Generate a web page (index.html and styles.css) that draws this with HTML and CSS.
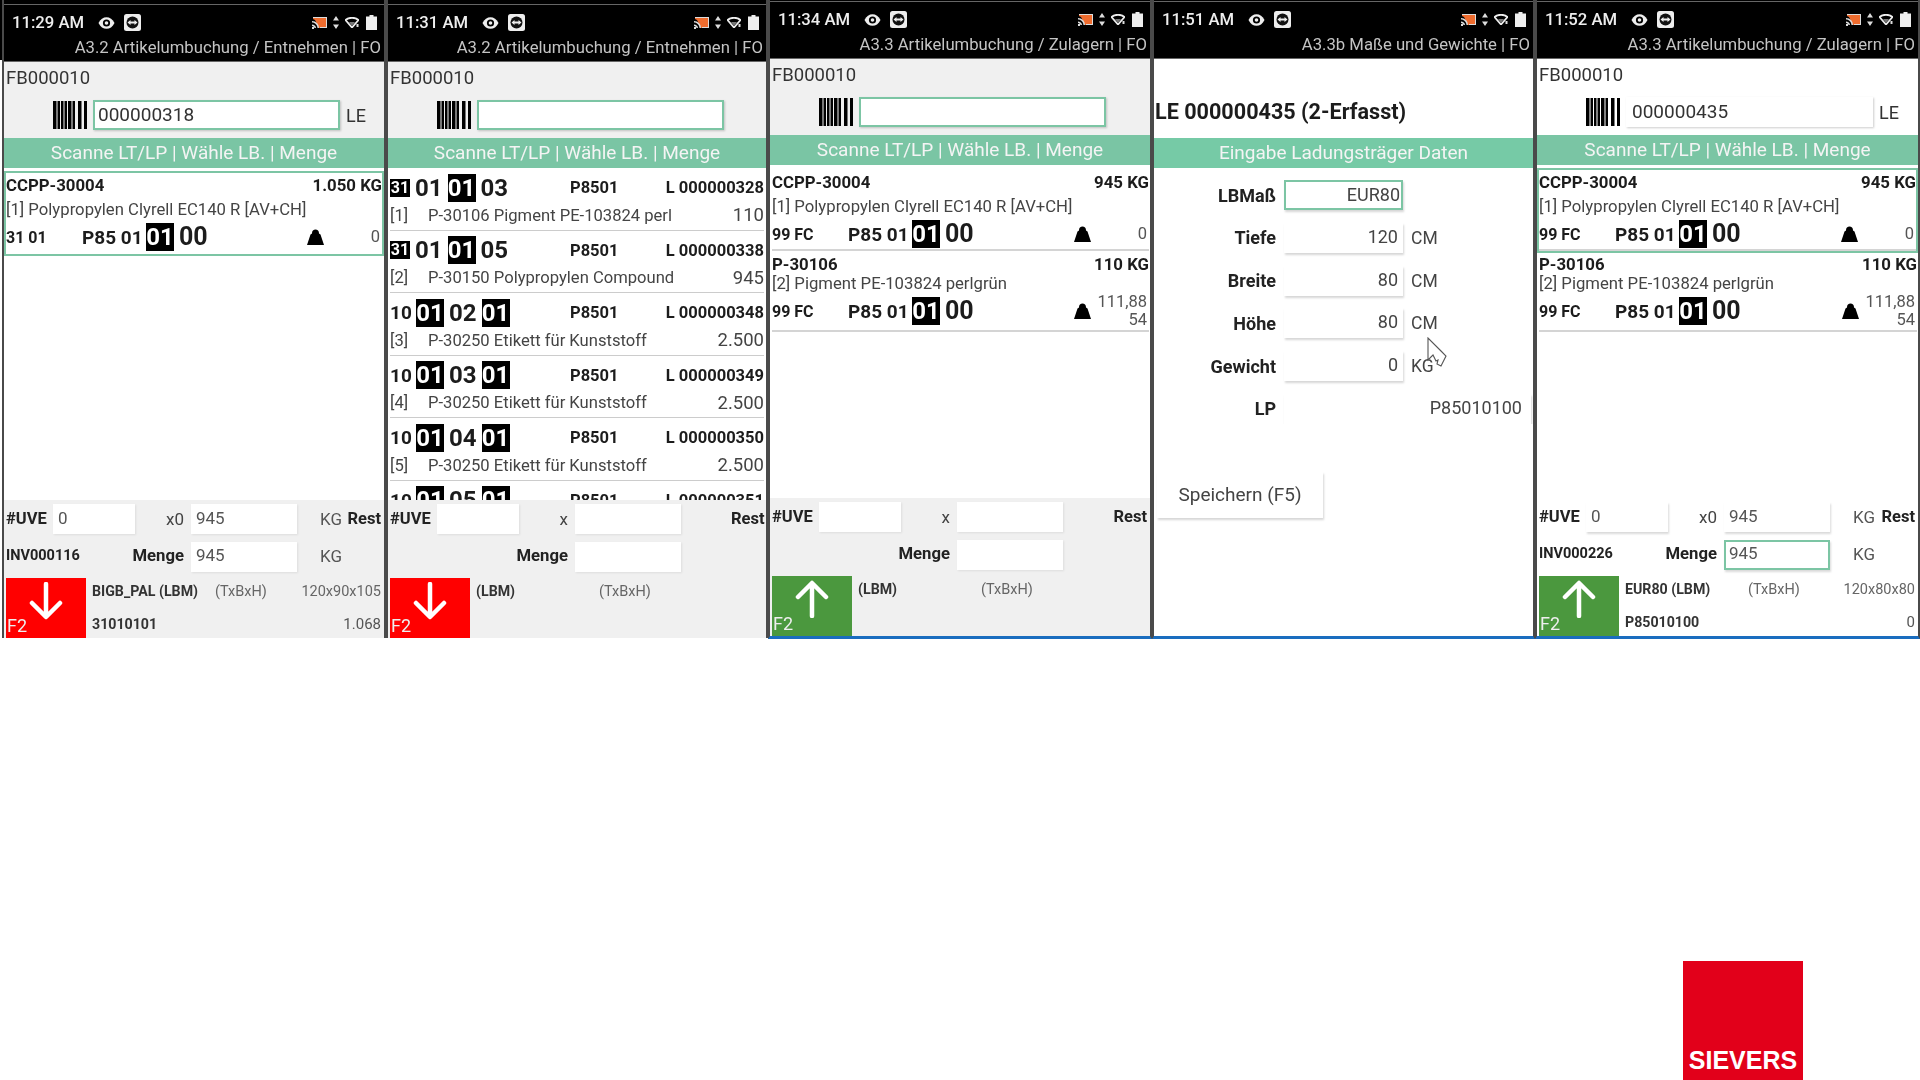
FILE: index.html
```html
<!DOCTYPE html>
<html lang="de">
<head>
<meta charset="UTF-8">
<title>Artikelumbuchung</title>
<link rel="stylesheet" href="styles.css">
</head>
<body>
<svg class="defs" width="0" height="0">
  <symbol id="i-eye" viewBox="0 0 17 12"><path d="M0.5 6C4 -1.8 13 -1.8 16.5 6C13 13.8 4 13.8 0.5 6Z" fill="#eee"/><circle cx="8.5" cy="6" r="3.6" fill="#000"/><circle cx="8.5" cy="6" r="1.8" fill="#eee"/></symbol>
  <symbol id="i-tv" viewBox="0 0 17 17"><rect width="17" height="17" rx="2.5" fill="#eee"/><circle cx="8.5" cy="8.5" r="6" fill="#111"/><path d="M3.5 8.5L6.5 6V7.5H10.5V6L13.5 8.5L10.5 11V9.5H6.5V11Z" fill="#eee"/></symbol>
  <symbol id="i-cast" viewBox="0 0 16 13"><path d="M1 3V1H15V12H7L6 10L3 4Z" fill="#ef6c2e"/><path d="M1 1H15V12H8V11H14V2H1Z" fill="#ddd"/><path d="M0 5C4 5 7 8 7 12H5.5C5.5 9 3 6.5 0 6.5ZM0 8.5C2 8.5 4 10 4 12H2.5C2.5 11 1 10 0 10ZM0 11H2V13H0Z" fill="#ddd"/></symbol>
  <symbol id="i-updown" viewBox="0 0 6 13"><path d="M3 0L6 4.5H0ZM3 13L0 8.5H6Z" fill="#ddd"/></symbol>
  <symbol id="i-wifi" viewBox="0 0 14 11"><path d="M0.5 3C4 0 10 0 13.5 3L7 10.5Z" fill="none" stroke="#eee" stroke-width="1.8"/><path d="M4 5H10L7 9Z" fill="#777"/><rect x="11.5" y="7" width="2" height="3" fill="#ddd"/></symbol>
  <symbol id="i-battery" viewBox="0 0 11 15"><path d="M3.5 0H7.5V1.5H11V15H0V1.5H3.5Z" fill="#eee"/></symbol>
  <symbol id="i-barcode" viewBox="0 0 34 28"><path d="M0 0H3.5V28H0ZM4.5 0H7V28H4.5ZM8 0H10.5V28H8ZM11.5 0H14V28H11.5ZM15 0H18.5V28H15ZM19.5 0H22V28H19.5ZM25 0H28.5V28H25ZM31 0H34V28H31Z" fill="#000"/></symbol>
  <symbol id="i-weight" viewBox="0 0 17 17"><path d="M5 5.5C4.5 0 12.5 0 12 5.5L13.5 6.5L17 17H0L3.5 6.5Z" fill="#000"/></symbol>
  <symbol id="i-down" viewBox="0 0 34 38"><path d="M17 2V34M3 21L17 35L31 21" fill="none" stroke="#fff" stroke-width="4.5" stroke-linecap="round" stroke-linejoin="round"/></symbol>
  <symbol id="i-up" viewBox="0 0 34 38"><path d="M17 36V4M3 17L17 3L31 17" fill="none" stroke="#fff" stroke-width="4.5" stroke-linecap="round" stroke-linejoin="round"/></symbol>
</svg>

<div class="phones">

  <!-- 11:29 Entnehmen, LE gescannt -->
  <section class="phone phone-low">
    <header class="head">
      <div class="status">
        <span class="time">11:29 AM</span>
        <svg class="ic-eye"><use href="#i-eye"/></svg>
        <svg class="ic-tv"><use href="#i-tv"/></svg>
        <svg class="ic-cast"><use href="#i-cast"/></svg>
        <svg class="ic-updown"><use href="#i-updown"/></svg>
        <svg class="ic-wifi"><use href="#i-wifi"/></svg>
        <svg class="ic-battery"><use href="#i-battery"/></svg>
      </div>
      <div class="title">A3.2 Artikelumbuchung / Entnehmen | FO</div>
    </header>
    <div class="scan">
      <div class="fb">FB000010</div>
      <div class="scan-row">
        <svg class="ic-barcode"><use href="#i-barcode"/></svg>
        <div class="scan-input focus">000000318</div>
        <span class="le">LE</span>
      </div>
    </div>
    <div class="banner">Scanne LT/LP | Wähle LB. | Menge</div>
    <div class="main">
      <div class="item item-first selected no-sep">
        <div class="line"><b>CCPP-30004</b><b>1.050 KG</b></div>
        <div class="desc desc-tall">[1] Polypropylen Clyrell EC140 R [AV+CH]</div>
        <div class="loc">
          <b class="loc-tag">31 01</b>
          <b class="loc-p">P85 01</b><b class="box">01</b><b class="loc-big">00</b>
          <svg class="ic-weight"><use href="#i-weight"/></svg>
          <span class="loc-val">0</span>
        </div>
      </div>
    </div>
    <div class="bottom">
      <div class="qty-row">
        <b class="lbl">#UVE</b>
        <div class="field">0</div>
        <span class="mult">x0</span>
        <div class="field">945</div>
        <span class="unit">KG</span>
        <b class="rest">Rest</b>
      </div>
      <div class="menge-row">
        <b class="inv">INV000116</b>
        <b class="menge">Menge</b>
        <div class="field">945</div>
        <span class="unit">KG</span>
      </div>
      <div class="action">
        <div class="f2 f2-red"><svg class="ic-arrow"><use href="#i-down"/></svg><span class="f2-text">F2</span></div>
        <div class="info">
          <div class="info-top"><b>BIGB_PAL (LBM)</b><span>(TxBxH)</span><span class="info-right">120x90x105</span></div>
          <div class="info-low"><b>31010101</b><span>1.068</span></div>
        </div>
      </div>
    </div>
  </section>

  <!-- 11:31 Entnehmen, Liste -->
  <section class="phone phone-low">
    <header class="head">
      <div class="status">
        <span class="time">11:31 AM</span>
        <svg class="ic-eye"><use href="#i-eye"/></svg>
        <svg class="ic-tv"><use href="#i-tv"/></svg>
        <svg class="ic-cast"><use href="#i-cast"/></svg>
        <svg class="ic-updown"><use href="#i-updown"/></svg>
        <svg class="ic-wifi"><use href="#i-wifi"/></svg>
        <svg class="ic-battery"><use href="#i-battery"/></svg>
      </div>
      <div class="title">A3.2 Artikelumbuchung / Entnehmen | FO</div>
    </header>
    <div class="scan">
      <div class="fb">FB000010</div>
      <div class="scan-row">
        <svg class="ic-barcode"><use href="#i-barcode"/></svg>
        <div class="scan-input focus"></div>
      </div>
    </div>
    <div class="banner">Scanne LT/LP | Wähle LB. | Menge</div>
    <div class="main main-list">
      <div class="row">
        <div class="row-top"><div class="code"><b class="box-small">31</b><b>01</b><b class="box">01</b><b>03</b></div><b class="row-p">P8501</b><b class="row-l">L 000000328</b></div>
        <div class="row-low"><span>[1]</span><span>P-30106 Pigment PE-103824 perl</span><span class="row-qty">110</span></div>
      </div>
      <div class="row">
        <div class="row-top"><div class="code"><b class="box-small">31</b><b>01</b><b class="box">01</b><b>05</b></div><b class="row-p">P8501</b><b class="row-l">L 000000338</b></div>
        <div class="row-low"><span>[2]</span><span>P-30150 Polypropylen Compound</span><span class="row-qty">945</span></div>
      </div>
      <div class="row">
        <div class="row-top"><div class="code"><b class="code-ten">10</b><b class="box">01</b><b>02</b><b class="box">01</b></div><b class="row-p">P8501</b><b class="row-l">L 000000348</b></div>
        <div class="row-low"><span>[3]</span><span>P-30250 Etikett für Kunststoff</span><span class="row-qty">2.500</span></div>
      </div>
      <div class="row">
        <div class="row-top"><div class="code"><b class="code-ten">10</b><b class="box">01</b><b>03</b><b class="box">01</b></div><b class="row-p">P8501</b><b class="row-l">L 000000349</b></div>
        <div class="row-low"><span>[4]</span><span>P-30250 Etikett für Kunststoff</span><span class="row-qty">2.500</span></div>
      </div>
      <div class="row">
        <div class="row-top"><div class="code"><b class="code-ten">10</b><b class="box">01</b><b>04</b><b class="box">01</b></div><b class="row-p">P8501</b><b class="row-l">L 000000350</b></div>
        <div class="row-low"><span>[5]</span><span>P-30250 Etikett für Kunststoff</span><span class="row-qty">2.500</span></div>
      </div>
      <div class="row">
        <div class="row-top"><div class="code"><b class="code-ten">10</b><b class="box">01</b><b>05</b><b class="box">01</b></div><b class="row-p">P8501</b><b class="row-l">L 000000351</b></div>
      </div>
    </div>
    <div class="bottom">
      <div class="qty-row">
        <b class="lbl">#UVE</b>
        <div class="field"></div>
        <span class="mult">x</span>
        <div class="field"></div>
        <span class="unit"></span>
        <b class="rest">Rest</b>
      </div>
      <div class="menge-row">
        <b class="inv"></b>
        <b class="menge">Menge</b>
        <div class="field"></div>
      </div>
      <div class="action">
        <div class="f2 f2-red"><svg class="ic-arrow"><use href="#i-down"/></svg><span class="f2-text">F2</span></div>
        <div class="info">
          <div class="info-top"><b>(LBM)</b><span>(TxBxH)</span></div>
        </div>
      </div>
    </div>
  </section>

  <!-- 11:34 Zulagern, leer -->
  <section class="phone phone-high">
    <header class="head">
      <div class="status">
        <span class="time">11:34 AM</span>
        <svg class="ic-eye"><use href="#i-eye"/></svg>
        <svg class="ic-tv"><use href="#i-tv"/></svg>
        <svg class="ic-cast"><use href="#i-cast"/></svg>
        <svg class="ic-updown"><use href="#i-updown"/></svg>
        <svg class="ic-wifi"><use href="#i-wifi"/></svg>
        <svg class="ic-battery"><use href="#i-battery"/></svg>
      </div>
      <div class="title">A3.3 Artikelumbuchung / Zulagern | FO</div>
    </header>
    <div class="scan">
      <div class="fb">FB000010</div>
      <div class="scan-row">
        <svg class="ic-barcode"><use href="#i-barcode"/></svg>
        <div class="scan-input focus"></div>
      </div>
    </div>
    <div class="banner">Scanne LT/LP | Wähle LB. | Menge</div>
    <div class="main">
      <div class="item item-first">
        <div class="line"><b>CCPP-30004</b><b>945 KG</b></div>
        <div class="desc desc-tall">[1] Polypropylen Clyrell EC140 R [AV+CH]</div>
        <div class="loc">
          <b class="loc-tag">99 FC</b>
          <b class="loc-p">P85 01</b><b class="box">01</b><b class="loc-big">00</b>
          <svg class="ic-weight"><use href="#i-weight"/></svg>
          <span class="loc-val">0</span>
        </div>
      </div>
      <div class="item">
        <div class="line line-short"><b>P-30106</b><b>110 KG</b></div>
        <div class="desc">[2] Pigment PE-103824 perlgrün</div>
        <div class="loc">
          <b class="loc-tag">99 FC</b>
          <b class="loc-p">P85 01</b><b class="box">01</b><b class="loc-big">00</b>
          <svg class="ic-weight"><use href="#i-weight"/></svg>
          <span class="loc-val">111,88<br>54</span>
        </div>
      </div>
    </div>
    <div class="bottom">
      <div class="qty-row">
        <b class="lbl">#UVE</b>
        <div class="field"></div>
        <span class="mult">x</span>
        <div class="field"></div>
        <span class="unit"></span>
        <b class="rest">Rest</b>
      </div>
      <div class="menge-row">
        <b class="inv"></b>
        <b class="menge">Menge</b>
        <div class="field"></div>
      </div>
      <div class="action">
        <div class="f2 f2-green"><svg class="ic-arrow"><use href="#i-up"/></svg><span class="f2-text">F2</span></div>
        <div class="info">
          <div class="info-top"><b>(LBM)</b><span>(TxBxH)</span></div>
        </div>
      </div>
    </div>
  </section>

  <!-- 11:51 Masse und Gewichte -->
  <section class="phone phone-high phone-form">
    <header class="head">
      <div class="status">
        <span class="time">11:51 AM</span>
        <svg class="ic-eye"><use href="#i-eye"/></svg>
        <svg class="ic-tv"><use href="#i-tv"/></svg>
        <svg class="ic-cast"><use href="#i-cast"/></svg>
        <svg class="ic-updown"><use href="#i-updown"/></svg>
        <svg class="ic-wifi"><use href="#i-wifi"/></svg>
        <svg class="ic-battery"><use href="#i-battery"/></svg>
      </div>
      <div class="title">A3.3b Maße und Gewichte | FO</div>
    </header>
    <div class="le-head">LE 000000435 (2-Erfasst)</div>
    <div class="banner banner-form">Eingabe Ladungsträger Daten</div>
    <div class="form">
      <b class="form-lbl">LBMaß</b><div class="form-field focus">EUR80</div><span></span>
      <b class="form-lbl">Tiefe</b><div class="form-field">120</div><span class="form-unit">CM</span>
      <b class="form-lbl">Breite</b><div class="form-field">80</div><span class="form-unit">CM</span>
      <b class="form-lbl">Höhe</b><div class="form-field">80</div><span class="form-unit">CM</span>
      <b class="form-lbl">Gewicht</b><div class="form-field">0</div><span class="form-unit">KG</span>
      <b class="form-lbl">LP</b><div class="form-field form-wide">P85010100</div>
    </div>
    <div class="form-foot">
      <button class="save">Speichern (F5)</button>
    </div>
    <svg class="cursor" width="20" height="31" viewBox="0 0 20 31"><path d="M1 1V23L6 18L9 24L11 23L10 27L14 29L19 19L14 14Z" fill="#fff" stroke="#555" stroke-width="1.1"/></svg>
  </section>

  <!-- 11:52 Zulagern, LE gescannt -->
  <section class="phone phone-high phone-white">
    <header class="head">
      <div class="status">
        <span class="time">11:52 AM</span>
        <svg class="ic-eye"><use href="#i-eye"/></svg>
        <svg class="ic-tv"><use href="#i-tv"/></svg>
        <svg class="ic-cast"><use href="#i-cast"/></svg>
        <svg class="ic-updown"><use href="#i-updown"/></svg>
        <svg class="ic-wifi"><use href="#i-wifi"/></svg>
        <svg class="ic-battery"><use href="#i-battery"/></svg>
      </div>
      <div class="title">A3.3 Artikelumbuchung / Zulagern | FO</div>
    </header>
    <div class="scan">
      <div class="fb">FB000010</div>
      <div class="scan-row">
        <svg class="ic-barcode"><use href="#i-barcode"/></svg>
        <div class="scan-input">000000435</div>
        <span class="le">LE</span>
      </div>
    </div>
    <div class="banner">Scanne LT/LP | Wähle LB. | Menge</div>
    <div class="main">
      <div class="item item-first selected">
        <div class="line"><b>CCPP-30004</b><b>945 KG</b></div>
        <div class="desc desc-tall">[1] Polypropylen Clyrell EC140 R [AV+CH]</div>
        <div class="loc">
          <b class="loc-tag">99 FC</b>
          <b class="loc-p">P85 01</b><b class="box">01</b><b class="loc-big">00</b>
          <svg class="ic-weight"><use href="#i-weight"/></svg>
          <span class="loc-val">0</span>
        </div>
      </div>
      <div class="item">
        <div class="line line-short"><b>P-30106</b><b>110 KG</b></div>
        <div class="desc">[2] Pigment PE-103824 perlgrün</div>
        <div class="loc">
          <b class="loc-tag">99 FC</b>
          <b class="loc-p">P85 01</b><b class="box">01</b><b class="loc-big">00</b>
          <svg class="ic-weight"><use href="#i-weight"/></svg>
          <span class="loc-val">111,88<br>54</span>
        </div>
      </div>
    </div>
    <div class="bottom">
      <div class="qty-row">
        <b class="lbl">#UVE</b>
        <div class="field">0</div>
        <span class="mult">x0</span>
        <div class="field">945</div>
        <span class="unit">KG</span>
        <b class="rest">Rest</b>
      </div>
      <div class="menge-row">
        <b class="inv">INV000226</b>
        <b class="menge">Menge</b>
        <div class="field focus">945</div>
        <span class="unit">KG</span>
      </div>
      <div class="action">
        <div class="f2 f2-green"><svg class="ic-arrow"><use href="#i-up"/></svg><span class="f2-text">F2</span></div>
        <div class="info">
          <div class="info-top"><b>EUR80 (LBM)</b><span>(TxBxH)</span><span class="info-right">120x80x80</span></div>
          <div class="info-low"><b>P85010100</b><span>0</span></div>
        </div>
      </div>
    </div>
  </section>

</div>

<div class="brand">
  <div class="logo">SIEVERS</div>
</div>
</body>
</html>
```
FILE: styles.css
```css
* {
  box-sizing: border-box;
}
body {
  margin: 0;
  background: #fff;
  font-family: Roboto, "Liberation Sans", sans-serif;
  color: #222;
  overflow: hidden;
}
b {
  font-weight: 700;
}
.defs {
  position: absolute;
}

/* row of phone screens */
.phones {
  display: grid;
  grid-template-columns: 384px 382px 384px 383px 385px;
  height: 639px;
  padding-left: 2px;
  background: linear-gradient(#000 60px, transparent 60px);
  filter: blur(0.5px);
}
.phone {
  position: relative;
  display: flex;
  flex-direction: column;
  background: #000;
  border-left: 2px solid #4a4a4a;
  border-right: 2px solid #4a4a4a;
  overflow: hidden;
}
.phone-low {
  height: 638px;
  padding-top: 4px;
}
.phone-high {
  height: 639px;
  padding-top: 1px;
  border-bottom: 3px solid #1a6dbf;
}

/* black title area */
.head {
  height: 58px;
  flex: none;
  border-top: 1px solid #666;
  border-bottom: 1px solid #666;
  background: #000;
  color: #ddd;
}
.status {
  display: flex;
  align-items: center;
  height: 33px;
  padding: 2px 7px 0 8px;
}
.time {
  font-size: 16.7px;
  font-weight: 500;
  color: #eee;
  width: 80px;
}
.status svg {
  flex: none;
}
.ic-eye { width: 17px; height: 12px; margin-left: 6px; }
.ic-tv { width: 17px; height: 17px; margin-left: 9px; }
.ic-cast { width: 16px; height: 13px; margin-left: auto; }
.ic-updown { width: 6px; height: 13px; margin-left: 5px; }
.ic-wifi { width: 14px; height: 11px; margin-left: 6px; }
.ic-battery { width: 11px; height: 15px; margin-left: 7px; }
.title {
  text-align: right;
  padding-right: 3px;
  font-size: 16.7px;
  line-height: 20px;
  color: #c4c4c4;
  white-space: nowrap;
}

/* scan header */
.scan {
  height: 76px;
  flex: none;
  background: #f0f0f0;
  padding: 6px 0 0 2px;
}
.phone-white .scan {
  background: #fff;
}
.fb {
  font-size: 18.5px;
  line-height: 20px;
  color: #333;
}
.scan-row {
  display: flex;
  align-items: center;
  margin-top: 12px;
  padding-left: 47px;
  height: 30px;
}
.ic-barcode {
  width: 34px;
  height: 28px;
  flex: none;
}
.scan-input {
  width: 247px;
  height: 30px;
  margin-left: 6px;
  padding-left: 3px;
  font-size: 19px;
  line-height: 26px;
  color: #333;
  background: #fff;
  box-shadow: 1px 1px 2px rgba(0, 0, 0, 0.2);
}
.phone-white .scan-input {
  padding-left: 6px;
  line-height: 30px;
}
.focus {
  border: 2px solid #7cc5a4;
}
.le {
  margin-left: 6px;
  font-size: 18px;
  color: #333;
}
.banner {
  height: 30px;
  flex: none;
  background: #7ac5a4;
  color: #f4f4f4;
  text-align: center;
  font-size: 19px;
  line-height: 30px;
}

/* item cards */
.main {
  flex: 1;
  min-height: 0;
  overflow: hidden;
  background: #fff;
}
.item {
  margin: 0 1px 0 0;
  border: 2px solid transparent;
  border-right: 0;
}
.item-first {
  margin-top: 3px;
}
.selected {
  border: 2px solid #7cc5a4;
  margin-right: 0;
}
.line {
  display: flex;
  justify-content: space-between;
  height: 24px;
  line-height: 24px;
  font-size: 16.8px;
  color: #1c1c1c;
}
.line-short {
  height: 19px;
  line-height: 19px;
}
.desc {
  height: 19px;
  line-height: 19px;
  font-size: 16.7px;
  color: #444;
  white-space: nowrap;
}
.desc-tall {
  height: 26px;
  line-height: 26px;
}
.loc {
  display: flex;
  align-items: center;
  min-height: 26px;
  padding-bottom: 1px;
  border-bottom: 2px solid #d4d4d4;
  color: #1c1c1c;
}
.no-sep .loc {
  border-bottom-color: transparent;
}
.loc-tag {
  width: 76px;
  font-size: 16px;
}
.loc-p {
  width: 64px;
  font-size: 19px;
}
.box {
  display: inline-block;
  width: 28px;
  height: 28px;
  line-height: 28px;
  text-align: center;
  background: #000;
  color: #fff;
  font-size: 24px;
  font-weight: 700;
}
.loc-big {
  margin-left: 5px;
  font-size: 25px;
  line-height: 26px;
}
.ic-weight {
  width: 17px;
  height: 17px;
  margin: -2px 0 0 auto;
  flex: none;
}
.loc-val {
  width: 58px;
  padding-right: 2px;
  text-align: right;
  font-size: 16.5px;
  line-height: 18px;
  color: #555;
}

/* list on second screen */
.main-list {
  padding: 0 2px 0 2px;
}
.row {
  height: 62.5px;
  padding-top: 2px;
  border-bottom: 1.5px solid #ccc;
}
.row-top {
  display: grid;
  grid-template-columns: 180px 1fr auto;
  align-items: center;
  height: 35px;
}
.code {
  display: flex;
  align-items: center;
  gap: 5px;
  font-size: 24px;
  color: #1c1c1c;
}
.code-ten {
  width: 21px;
  font-size: 19px;
}
.box-small {
  width: 20px;
  height: 18px;
  line-height: 18px;
  text-align: center;
  background: #000;
  color: #fff;
  font-size: 16px;
}
.row-p,
.row-l {
  font-size: 16.5px;
  color: #1c1c1c;
}
.row-low {
  display: grid;
  grid-template-columns: 38px 1fr auto;
  align-items: center;
  height: 22px;
  margin-top: -1px;
  font-size: 16.6px;
  color: #444;
}
.row-qty {
  font-size: 18.5px;
}

/* grey footer */
.bottom {
  height: 138px;
  flex: none;
  padding: 4px 3px 0 2px;
  background: #f0f0f0;
}
.phone-white .bottom {
  background: #fff;
}
.qty-row,
.menge-row {
  display: grid;
  align-items: center;
  height: 30px;
  font-size: 17px;
  margin-left: -2px;
}
.qty-row {
  grid-template-columns: 49px 82px 56px 106px 50px 1fr;
}
.menge-row {
  grid-template-columns: 121px 66px 106px 1fr;
  margin-top: 8px;
}
.lbl {
  padding: 0 0 1px 2px;
  font-size: 16.5px;
}
.inv {
  padding: 0 0 3px 2px;
  font-size: 14.5px;
}
.menge {
  padding: 0 7px 3px 0;
  text-align: right;
  white-space: nowrap;
  font-size: 16.7px;
}
.mult {
  padding: 0 7px 1px 0;
  text-align: right;
  color: #444;
}
.field {
  height: 30px;
  padding-left: 5px;
  background: #fff;
  box-shadow: 1px 1px 2px rgba(0, 0, 0, 0.08);
  line-height: 28px;
  font-size: 17px;
  color: #555;
}
.menge-row .field {
  line-height: 27px;
}
.menge-row .field.focus {
  line-height: 23px;
  padding-left: 3px;
}
.phone-white .field {
  box-shadow: 1px 2px 2px rgba(0, 0, 0, 0.15);
}
.unit {
  padding: 0 0 1px 23px;
  color: #555;
}
.menge-row .unit {
  padding-bottom: 3px;
}
.rest {
  text-align: right;
  padding: 0 0 1px 0;
  font-size: 16.5px;
}
.action {
  display: flex;
  height: 60px;
  margin-top: 6px;
}
.f2 {
  position: relative;
  width: 80px;
  flex: none;
  display: flex;
  justify-content: center;
}
.f2-red { background: #ff0000; }
.f2-green { background: #4b983e; }
.ic-arrow {
  width: 34px;
  height: 38px;
  margin-top: 4px;
}
.f2-text {
  position: absolute;
  left: 1px;
  bottom: 2px;
  color: #eee;
  font-size: 18px;
}
.info {
  flex: 1;
  padding-left: 6px;
  font-size: 14.2px;
  color: #333;
}
.info-top {
  display: grid;
  grid-template-columns: 123px auto 1fr;
  align-items: center;
  height: 26px;
}
.info-top span {
  color: #666;
  font-size: 14.5px;
}
.info-top .info-right {
  text-align: right;
  font-size: 14.5px;
}
.info-low {
  display: flex;
  justify-content: space-between;
  align-items: center;
  height: 26px;
  margin-top: 7px;
}
.info-low span {
  color: #555;
  font-size: 15px;
}

/* measurements form */
.le-head {
  height: 79px;
  flex: none;
  padding: 39px 0 0 1px;
  background: #fff;
  font-size: 21.6px;
  font-weight: 700;
  line-height: 28px;
  color: #1c1c1c;
}
.banner-form {
  background: #76caa6;
}
.form {
  display: grid;
  grid-template-columns: 122px 119px 1fr;
  grid-auto-rows: 30px;
  column-gap: 8px;
  row-gap: 12.8px;
  align-items: center;
  padding: 12px 2px 0 0;
  background: #fff;
  flex: none;
}
.form-lbl {
  text-align: right;
  font-size: 18px;
  color: #222;
}
.form-field {
  height: 30px;
  padding-right: 5px;
  text-align: right;
  font-size: 18px;
  line-height: 28px;
  color: #444;
  background: #fff;
  box-shadow: 1px 2px 2px rgba(0, 0, 0, 0.16);
}
.form-field.focus {
  line-height: 26px;
  padding-right: 1px;
}
.form-unit {
  font-size: 17.5px;
  color: #444;
}
.form-wide {
  grid-column: 2 / 4;
  padding-right: 9px;
}
.form-foot {
  flex: 1;
  padding: 48px 0 0 3px;
  background: #fff;
}
.save {
  display: block;
  width: 166px;
  height: 46px;
  border: 0;
  background: #fff;
  box-shadow: 1px 2px 2px rgba(0, 0, 0, 0.16);
  font-family: inherit;
  font-size: 19px;
  color: #444;
}
.cursor {
  position: absolute;
  left: 273px;
  top: 337px;
}

/* logo in the corner */
.brand {
  display: flex;
  justify-content: flex-end;
  margin-top: 322px;
  padding-right: 117px;
}
.logo {
  width: 120px;
  height: 119px;
  display: flex;
  align-items: flex-end;
  justify-content: center;
  padding-bottom: 5px;
  background: #e2001a;
  color: #fff;
  font-family: "Liberation Sans", sans-serif;
  font-size: 25px;
  font-weight: 700;
}
```
